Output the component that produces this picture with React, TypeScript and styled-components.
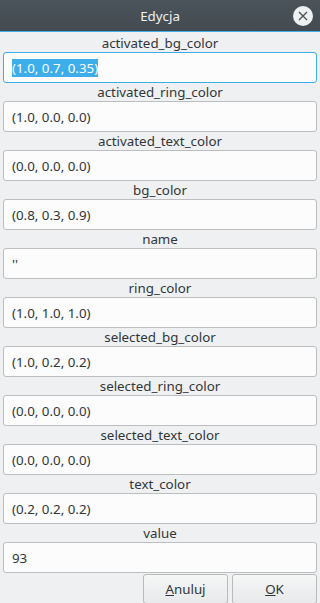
import React from "react";
import styled, { createGlobalStyle } from "styled-components";

const Global = createGlobalStyle`
  html, body { margin: 0; padding: 0; background: #eff0f1; }
  body { font-family: "Noto Sans", "DejaVu Sans", sans-serif; font-size: 13.33px; color: #31363b; }
  * { box-sizing: border-box; }
`;

const Window = styled.div`
  width: 320px;
  height: 603px;
  display: flex;
  flex-direction: column;
  background: #eff0f1;
  overflow: hidden;
`;

const TitleBar = styled.div`
  height: 32px;
  flex: none;
  display: flex;
  align-items: center;
  justify-content: center;
  position: relative;
  background: linear-gradient(#4b545b, #434b51);
  border-bottom: 1px solid #3daee9;
  color: #eff0f1;
  font-size: 13.33px;
`;

const CloseButton = styled.div`
  position: absolute;
  right: 7px;
  top: 6px;
  width: 20px;
  height: 20px;
  border-radius: 50%;
  background: #eff0f1;
  display: flex;
  align-items: center;
  justify-content: center;
`;

const Form = styled.div`
  display: flex;
  flex-direction: column;
  padding: 2px 3px 0 3px;
`;

const Field = styled.div`
  display: flex;
  flex-direction: column;
`;

const Label = styled.div`
  height: 18px;
  line-height: 18px;
  text-align: center;
`;

const Input = styled.div<{ $focused?: boolean }>`
  height: 31px;
  border: 1px solid ${(p) => (p.$focused ? "#3daee9" : "#bcbebf")};
  border-radius: 3px;
  background: #fcfcfc;
  display: flex;
  align-items: center;
  padding-left: 8px;
  white-space: nowrap;
`;

const Selected = styled.span`
  background: #3daee9;
  color: #fcfcfc;
  line-height: 18px;
`;

const Buttons = styled.div`
  display: flex;
  justify-content: flex-end;
  gap: 4px;
  padding: 1px 3px 0 0;
`;

const Button = styled.div`
  width: 85px;
  height: 30px;
  border: 1px solid #b8babb;
  border-radius: 3px;
  background: linear-gradient(#f5f6f6, #e8e9ea);
  display: flex;
  align-items: center;
  justify-content: center;
`;

const fields: [string, string][] = [
  ["activated_bg_color", "(1.0, 0.7, 0.35)"],
  ["activated_ring_color", "(1.0, 0.0, 0.0)"],
  ["activated_text_color", "(0.0, 0.0, 0.0)"],
  ["bg_color", "(0.8, 0.3, 0.9)"],
  ["name", "''"],
  ["ring_color", "(1.0, 1.0, 1.0)"],
  ["selected_bg_color", "(1.0, 0.2, 0.2)"],
  ["selected_ring_color", "(0.0, 0.0, 0.0)"],
  ["selected_text_color", "(0.0, 0.0, 0.0)"],
  ["text_color", "(0.2, 0.2, 0.2)"],
  ["value", "93"],
];

export default function App() {
  return (
    <>
      <Global />
      <Window>
        <TitleBar>
          Edycja
          <CloseButton>
            <svg width="10" height="10" viewBox="0 0 10 10">
              <path d="M1 1L9 9M9 1L1 9" stroke="#4b545b" strokeWidth="1.4" />
            </svg>
          </CloseButton>
        </TitleBar>
        <Form>
          {fields.map(([k, v], i) => (
            <Field key={k}>
              <Label>{k}</Label>
              <Input $focused={i === 0}>{i === 0 ? <Selected>{v}</Selected> : v}</Input>
            </Field>
          ))}
        </Form>
        <Buttons>
          <Button>
            <span><u>A</u>nuluj</span>
          </Button>
          <Button>
            <span><u>O</u>K</span>
          </Button>
        </Buttons>
      </Window>
    </>
  );
}
